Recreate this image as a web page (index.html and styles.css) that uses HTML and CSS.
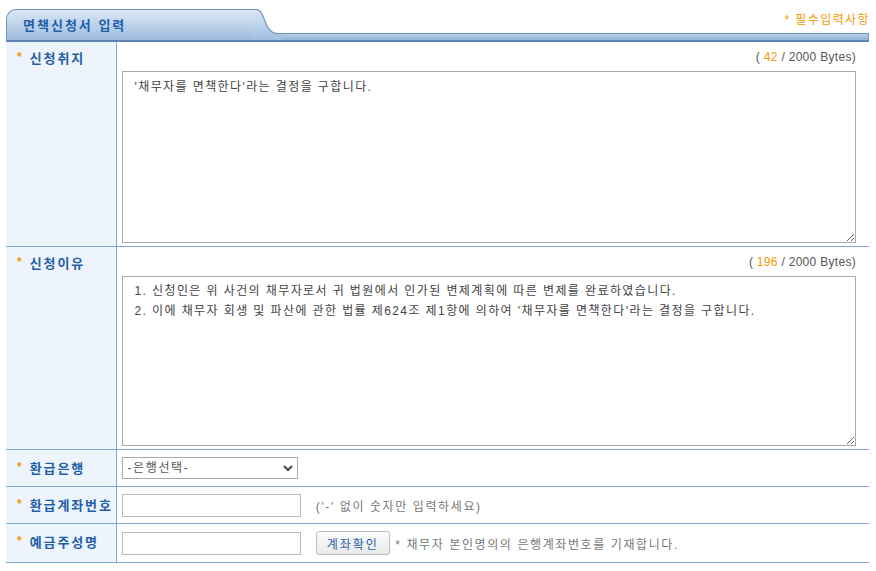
FILE: index.html
```html
<!DOCTYPE html>
<html lang="ko">
<head>
  <meta charset="UTF-8">
  <title>면책신청서 입력</title>
  <link rel="stylesheet" href="styles.css">
</head>
<body>

  <div class="wrap">
    <div class="form-head">
      <div class="tab"><h2>면책신청서 입력</h2></div>
      <svg class="tab-curve" width="30" height="33" viewBox="0 0 30 33">
        <defs>
          <linearGradient id="tabfill" x1="0" y1="0" x2="0" y2="1">
            <stop offset="0" stop-color="#dce8f4"/>
            <stop offset="1" stop-color="#9dbcdf"/>
          </linearGradient>
        </defs>
        <path d="M0,0.5 H4 C14,0.5 11,24.5 26,24.5 H30 V33 H0 Z" fill="url(#tabfill)"/>
        <path d="M0,0.5 H4 C14,0.5 11,24.5 26,24.5 H30" fill="none" stroke="#7396c3" stroke-width="1.2"/>
        <rect x="0" y="31" width="30" height="2" fill="#5b84b6"/>
      </svg>
      <div class="head-right">
        <p class="req">* 필수입력사항</p>
        <div class="bar"></div>
      </div>
    </div>

    <table class="form-table">
      <tr>
        <th><span class="star">*</span>신청취지</th>
        <td class="area-cell">
          <div class="counter">( <em>42</em> / 2000 Bytes)</div>
          <textarea class="big">'채무자를 면책한다'라는 결정을 구합니다.</textarea>
        </td>
      </tr>
      <tr>
        <th><span class="star">*</span>신청이유</th>
        <td class="area-cell">
          <div class="counter">( <em>196</em> / 2000 Bytes)</div>
          <textarea class="big tall">1. 신청인은 위 사건의 채무자로서 귀 법원에서 인가된 변제계획에 따른 변제를 완료하였습니다.
2. 이에 채무자 회생 및 파산에 관한 법률 제624조 제1항에 의하여 '채무자를 면책한다'라는 결정을 구합니다.</textarea>
        </td>
      </tr>
      <tr class="short">
        <th><span class="star">*</span>환급은행</th>
        <td>
          <span class="select-box">
            <select>
              <option>-은행선택-</option>
            </select>
            <svg class="chev" width="10" height="7" viewBox="0 0 10 7"><path d="M1,1 L5,5 L9,1" fill="none" stroke="#444" stroke-width="2"/></svg>
          </span>
        </td>
      </tr>
      <tr class="short">
        <th><span class="star">*</span>환급계좌번호</th>
        <td>
          <input type="text" class="field">
          <span class="hint">('-' 없이 숫자만 입력하세요)</span>
        </td>
      </tr>
      <tr class="short last">
        <th><span class="star">*</span>예금주성명</th>
        <td>
          <input type="text" class="field">
          <button type="button">계좌확인</button>
          <span class="note">* 채무자 본인명의의 은행계좌번호를 기재합니다.</span>
        </td>
      </tr>
    </table>
  </div>

</body>
</html>
```

FILE: styles.css
```css
body {
  margin: 0;
  background: #fff;
  font-family: "Liberation Sans", "Noto Sans CJK KR", sans-serif;
  font-size: 12px;
  color: #444;
}

.wrap {
  width: 863px;
  margin: 9px 0 0 6px;
}

/* header tab */
.form-head {
  display: flex;
  height: 33px;
}

.tab {
  width: 246px;
  height: 33px;
  box-sizing: border-box;
  border-top: 1px solid #7396c3;
  border-left: 1px solid #7396c3;
  border-bottom: 2px solid #5b84b6;
  border-radius: 10px 0 0 0;
  background: linear-gradient(#dce8f4, #9dbcdf);
}

.tab h2 {
  margin: 0;
  padding: 8px 0 0 16px;
  font-size: 13px;
  line-height: 16px;
  font-weight: bold;
  color: #1f5ea8;
  letter-spacing: 2px;
}

.tab-curve {
  display: block;
  flex: none;
}

.head-right {
  flex: 1;
  display: flex;
  flex-direction: column;
}

.req {
  margin: 0 -1px 0 0;
  height: 24px;
  line-height: 22px;
  text-align: right;
  color: #f39800;
  font-size: 12px;
  letter-spacing: 1.4px;
}

.bar {
  height: 9px;
  box-sizing: border-box;
  border-top: 1px solid #7396c3;
  border-right: 1px solid #6b8fbf;
  border-bottom: 2px solid #5b84b6;
  background: linear-gradient(#b8cee8, #93b3da);
}

/* form table */
.form-table {
  width: 100%;
  border-collapse: collapse;
}

.form-table th {
  width: 110px;
  box-sizing: border-box;
  padding: 6px 0 0 11px;
  vertical-align: top;
  text-align: left;
  background: #eef4fc;
  border-right: 1px solid #7ea7e0;
  border-bottom: 1px solid #7ea7e0;
  color: #1f5ea8;
  font-size: 13px;
  line-height: 18px;
  letter-spacing: 1.9px;
  white-space: nowrap;
}

.star {
  color: #f39800;
  font-size: 12px;
  margin-right: 8px;
  letter-spacing: 0;
  vertical-align: 2px;
}

.form-table td {
  padding: 0 0 0 5px;
  border-bottom: 1px solid #7ea7e0;
  vertical-align: middle;
}

.form-table .area-cell {
  padding: 8px 13px 3px 5px;
  vertical-align: top;
}

.counter {
  text-align: right;
  line-height: 14px;
  color: #555;
  margin-bottom: 7px;
  letter-spacing: 0.3px;
}

.counter em {
  font-style: normal;
  color: #f39800;
}

textarea.big {
  display: block;
  width: 100%;
  height: 172px;
  box-sizing: border-box;
  border: 1px solid #aaa;
  padding: 5px 12px;
  margin: 0;
  resize: vertical;
  font-family: "Liberation Sans", "Noto Sans CJK KR", sans-serif;
  font-size: 12px;
  line-height: 20px;
  color: #444;
  letter-spacing: 1.4px;
}

textarea.tall {
  height: 170px;
  padding-top: 4px;
}

.short th {
  padding-top: 8px;
  height: 36px;
}

.short td {
  height: 36px;
}

.last th,
.last td {
  height: 38px;
}

.select-box {
  position: relative;
  display: inline-block;
  vertical-align: middle;
}

.select-box select {
  appearance: none;
  width: 176px;
  height: 22px;
  box-sizing: border-box;
  border: 1px solid #aaa;
  background: #fff;
  padding: 0 0 0 5px;
  font-family: "Liberation Sans", "Noto Sans CJK KR", sans-serif;
  font-size: 12px;
  color: #555;
  letter-spacing: 1.6px;
}

.chev {
  position: absolute;
  right: 5px;
  top: 8px;
}

.field {
  width: 179px;
  height: 23px;
  box-sizing: border-box;
  border: 1px solid #bbb;
  margin: 0;
  vertical-align: middle;
}

.hint,
.note {
  color: #777;
  letter-spacing: 1.6px;
  vertical-align: middle;
}

.hint {
  margin-left: 12px;
}

button {
  width: 74px;
  height: 24px;
  margin: 0 0 0 12px;
  padding: 0;
  border: 1px solid #bdbdbd;
  border-radius: 3px;
  background: linear-gradient(#fdfdfd, #e9e9e9);
  color: #1f5ea8;
  font-family: "Liberation Sans", "Noto Sans CJK KR", sans-serif;
  font-size: 12px;
  letter-spacing: 2px;
  vertical-align: middle;
  cursor: pointer;
}

.note {
  margin-left: 2px;
}
```
